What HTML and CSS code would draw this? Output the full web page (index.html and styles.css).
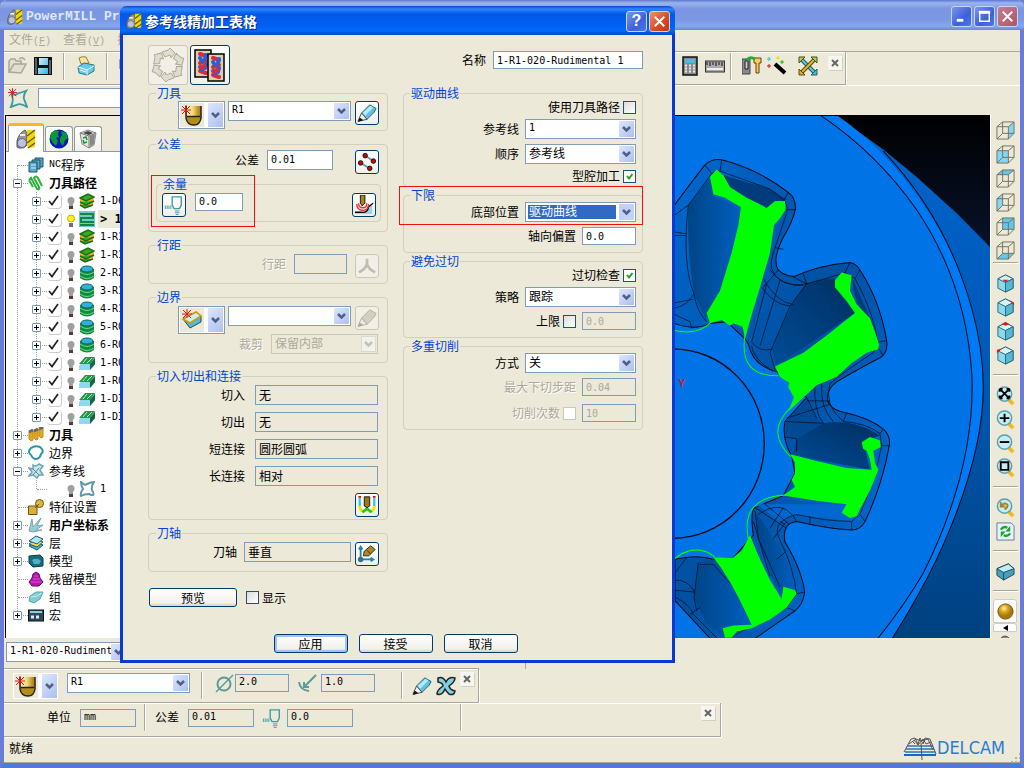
FILE: index.html
```html
<!DOCTYPE html>
<html lang="zh-CN">
<head>
  <meta charset="UTF-8">
  <meta name="viewport" content="width=device-width, initial-scale=1.0">
  <title>PowerMILL Pro</title>
  <link rel="stylesheet" href="styles.css">
</head>
<body>
  <svg class="sprite" width="0" height="0">
    <defs>
      <linearGradient id="gold" x1="0" x2="1"><stop offset="0" stop-color="#fff6c0"/><stop offset=".5" stop-color="#f4d878"/><stop offset="1" stop-color="#b08818"/></linearGradient>
      <linearGradient id="aqua" x1="0" x2="1" y2="1"><stop offset="0" stop-color="#d8f4ff"/><stop offset="1" stop-color="#38b0d8"/></linearGradient>
      <radialGradient id="ball" cx=".4" cy=".3"><stop offset="0" stop-color="#fff0a0"/><stop offset=".5" stop-color="#d8a820"/><stop offset="1" stop-color="#a87808"/></radialGradient>
    </defs>
    <symbol id="i-mill" viewBox="0 0 20 20">
      <path d="M1 18V12Q3 4 9 1L11 4V16Q8 20 3 19Z" fill="#989898" stroke="#555"/>
      <circle cx="6" cy="14" r="4.500" fill="#bcc2e4" stroke="#667"/><path d="M4 6H9" stroke="#eee" stroke-width="2"/>
      <path d="M11 1H19V18L15 19L11 17Z" fill="#f4d800"/><path d="M11 7L19 1M11 14L19 8M12 19L19 14" stroke="#6b5b00" stroke-width="1.500"/>
    </symbol>
    <symbol id="i-globe" viewBox="0 0 20 20">
      <circle cx="10" cy="10" r="9.500" fill="#0818b8"/>
      <path d="M2 4L6 1L10 2L9 5L10 8L7 9L9 12L7 17L4 14L1 9ZM12 2L17 4L19 9L16 11L14 17L11 13L11 9L13 6Z" fill="#089838"/>
    </symbol>
    <symbol id="i-bin" viewBox="0 0 20 20">
      <path d="M2 4L10 1L18 4L16 16L11 19L4 15Z" fill="#e4e4e4" stroke="#888"/><path d="M2 4L11 7L18 4M11 7V19" stroke="#777" fill="none"/><path d="M12 7L17 5L16 15L12 18Z" fill="#888"/><path d="M5 4L10 2L15 4L11 6Z" fill="#444"/>
      <path d="M5 9L8 8L9 11M9 13L6 14L5 11" stroke="#18983c" stroke-width="1.500" fill="none"/>
    </symbol>
    <symbol id="i-open" viewBox="0 0 20 20">
      <path d="M1 16V5L3 3H7L8 5H13V8M1 16L6 8H18L13 17L1 16ZM11 3Q14 0 17 4" fill="#e2dfd0" stroke="#aaa798" stroke-width="1.500"/>
    </symbol>
    <symbol id="i-save" viewBox="0 0 20 20">
      <path d="M1 1H19V19H1Z" fill="#111"/><path d="M6 2H15V9H6ZM5 12H15V18H5Z" fill="url(#aqua)"/><path d="M3 2V18M17 4V18" stroke="#58606a" stroke-width="2"/>
    </symbol>
    <symbol id="i-print" viewBox="0 0 20 20">
      <path d="M5 8L3 2Q6 0 10 1L13 7Z" fill="#ffe4a0" stroke="#9a7a30"/>
      <path d="M2 11L8 7L18 9V15L11 19L3 17Z" fill="#6cc8e4" stroke="#257a9a"/><path d="M2 11L11 14L18 10M11 14V19M4 14L10 16" stroke="#e4faff" fill="none"/>
    </symbol>
    <symbol id="i-newref" viewBox="0 0 22 22">
      <path d="M4 6Q8 9 11 6Q15 5 20 3Q16 9 18 13Q20 18 21 21Q15 17 11 18Q6 20 3 21Q6 15 5 11Z" fill="none" stroke="#3f9aa4" stroke-width="2"/>
      <path d="M5 0V11M0 5H10M1 1L9 9M9 1L1 9" stroke="#d81818"/>
    </symbol>
    <symbol id="i-calc" viewBox="0 0 16 20">
      <rect x="1" y="1" width="14" height="18" fill="#8a8a8a" stroke="#111" stroke-width="1.500"/><rect x="3" y="3" width="10" height="4" fill="#50b8e8"/>
      <path d="M3 9.500H13M3 12.500H13M3 15.500H13" stroke="#e8e8e8" stroke-width="2" stroke-dasharray="2 2"/>
    </symbol>
    <symbol id="i-ruler" viewBox="0 0 20 20">
      <rect x=".5" y="5" width="19" height="11" fill="#aaa" stroke="#333"/><path d="M2 9V6M5 10V6M8 9V6M11 10V6M14 9V6M17 10V6" stroke="#111"/><path d="M2 13H18" stroke="#eee" stroke-width="2"/>
    </symbol>
    <symbol id="i-tools" viewBox="0 0 20 20">
      <path d="M0 3H8V18H0Z" fill="#888" stroke="#444"/><path d="M3 5H6V13H3Z" fill="#ccc" stroke="#222"/>
      <path d="M12 2H19V7H17V17H14V7H12Z" fill="#f8cc60" stroke="#654008"/><path d="M5 4Q8 0 13 3" stroke="#20b030" stroke-width="3" fill="none"/>
    </symbol>
    <symbol id="i-wand" viewBox="0 0 20 20">
      <path d="M8 8L18 17" stroke="#000" stroke-width="4"/><path d="M2 1V5M0 3H4" stroke="#00d0e8"/><path d="M11 0V4M9 2H13" stroke="#f0e000"/><path d="M15 4V8M13 6H17" stroke="#10b810"/><path d="M2 8V12M0 10H4" stroke="#d81010"/>
    </symbol>
    <symbol id="i-arrows" viewBox="0 0 20 20">
      <path d="M4 4L16 16" stroke="#1f5e68" stroke-width="4"/><path d="M4 4L16 16" stroke="#60c8d0" stroke-width="2"/><path d="M16 4L4 16" stroke="#5a4a10" stroke-width="4"/><path d="M16 4L4 16" stroke="#d8b830" stroke-width="2"/>
      <path d="M1 1H7L1 7ZM19 1V7L13 1Z" fill="#b8cc50" stroke="#40501a"/><path d="M1 19V13L7 19Z" fill="#e0b020" stroke="#5a4a10"/><path d="M19 19H13L19 13Z" fill="#48bcd0" stroke="#1f5e68"/>
    </symbol>
    <symbol id="i-newtool" viewBox="0 0 24 24">
      <rect width="24" height="24" fill="#ece9d8"/>
      <path d="M6 3V15Q7 22 14 22Q20 22 21 15V3H18V13H10V3Z" fill="#b48c1c"/><path d="M7 3H19V13H7Z" fill="url(#gold)"/><path d="M6 3V15Q7 22 14 22Q20 22 21 15V3M7 13.500H20" fill="none" stroke="#222" stroke-width="1.500"/>
      <path d="M6 2V12M1 7H11M2 3L10 11M10 3L2 11" stroke="#d81818"/>
    </symbol>
    <symbol id="i-newbound" viewBox="0 0 24 24">
      <rect width="24" height="24" fill="#ece9d8"/>
      <path d="M3 11L10 20L21 14V8L16 4Z" fill="#58b8cc" stroke="#24505a"/><path d="M3 11L16 4L21 8L10 15Z" fill="#c8f0f8" stroke="#d0980c" stroke-width="1.500"/>
      <path d="M7 1V10M2 6H12M3 2L11 10M11 2L3 10" stroke="#d81818"/>
    </symbol>
    <symbol id="i-pencil" viewBox="0 0 22 22">
      <path d="M5 11L14 2L21 6L19 10L11 18Z" fill="#60c0e0" stroke="#285868"/><path d="M6 11L15 3L18 5L9 14Z" fill="#b0ecfc"/><path d="M5 11L1 20L11 18Z" fill="#eee" stroke="#444"/><path d="M3 16L1 21L7 19Z" fill="#111"/>
    </symbol>
    <symbol id="i-pencil-off" viewBox="0 0 22 22">
      <path d="M5 11L14 2L21 6L19 10L11 18Z" fill="#d2cfc0" stroke="#b0ad9e"/><path d="M5 11L1 20L11 18Z" fill="#eceadf" stroke="#b0ad9e"/><path d="M3 16L1 21L7 19Z" fill="#aaa798"/>
    </symbol>
    <symbol id="i-recycle" viewBox="0 0 36 36">
      <g fill="#e0ddce" stroke="#aeab9c">
        <path id="seg" d="M12 5L18 3L20 1L25 6L21 11L20 8L15 10Z"/>
        <use href="#seg" transform="rotate(60 18 18)"/><use href="#seg" transform="rotate(120 18 18)"/><use href="#seg" transform="rotate(180 18 18)"/><use href="#seg" transform="rotate(240 18 18)"/><use href="#seg" transform="rotate(300 18 18)"/>
      </g>
    </symbol>
    <symbol id="i-copy" viewBox="0 0 36 36">
      <g id="sheet">
        <rect x="3" y="3" width="16" height="27" fill="#d8d0b0" stroke="#000" stroke-width="1.500"/>
        <g stroke-width="4" stroke-linecap="round"><path d="M8 7L14 9M8 16L14 14M8 24L14 26" stroke="#e02838"/><path d="M14 8L13 12M8 11L10 14M14 17L13 21M8 20L10 23" stroke="#2860d8"/><path d="M12 19L9 21" stroke="#e02838"/></g>
      </g>
      <use href="#sheet" x="13" y="4"/>
    </symbol>
    <symbol id="i-points" viewBox="0 0 22 22">
      <path d="M9 4L18 10M4 12L14 18" stroke="#58a8b8" stroke-width="2"/>
      <g fill="#b81010" stroke="#300"><circle cx="9" cy="4" r="2.500"/><circle cx="18" cy="10" r="2.500"/><circle cx="4" cy="12" r="2.500"/><circle cx="14" cy="18" r="2.500"/></g>
    </symbol>
    <symbol id="i-thick" viewBox="0 0 22 22">
      <path d="M9 2H19V11L17 15H11L9 11Z" fill="none" stroke="#3f9aa4" stroke-width="1.500"/><path d="M1 13.500H9" stroke="#3f9aa4" stroke-width="4" stroke-dasharray="1 1"/><path d="M12 17.500H17M12 19.500H17M13 21.500H16" stroke="#3f9aa4"/>
    </symbol>
    <symbol id="i-compthick" viewBox="0 0 22 22">
      <path d="M1 19H8Q15 20 16 13L20 9V21H1Z" fill="#90d8f0"/><path d="M1 19H8Q15 20 16 13L21 9" fill="none" stroke="#000" stroke-width="1.500"/>
      <path d="M3 10Q3 17 10 17Q16 17 16 10M5 9Q5 14 10 14Q14 14 14 9" fill="none" stroke="#f03040" stroke-width="1.500"/><path d="M7 0H12V9L9 12L7 9Z" fill="#a88420" stroke="#111"/>
    </symbol>
    <symbol id="i-step-off" viewBox="0 0 22 22"><path d="M11 3V9Q9 15 2 18M11 9Q13 15 20 18" fill="none" stroke="#c0bdae" stroke-width="3"/></symbol>
    <symbol id="i-leads" viewBox="0 0 22 22">
      <path d="M3 3V13M19 3V13" stroke="#28c8e8" stroke-width="2.500"/><path d="M3 1V3M19 1V3" stroke="#e01010" stroke-width="3"/><path d="M3 12Q3 18 8 18M19 12Q19 18 14 18" stroke="#f0e400" stroke-width="3" fill="none"/><path d="M6 19L11 15L16 19" stroke="#20c820" stroke-width="3" fill="none"/>
      <path d="M8 2H14V12L11 14L8 12Z" fill="#a07810" stroke="#111"/>
    </symbol>
    <symbol id="i-axis" viewBox="0 0 22 22">
      <path d="M4 17V4M4 17H17M2 6L4 3L6 6M15 15L18 17L15 19" fill="none" stroke="#1c88a0" stroke-width="2"/><circle cx="4" cy="17" r="3" fill="#387080"/><path d="M7 13L8 8L15 2L20 6L13 13Z" fill="#b08820" stroke="#222"/><path d="M11 7L15 11" stroke="#332808"/>
    </symbol>
    <symbol id="i-dia" viewBox="0 0 20 20"><circle cx="9" cy="11" r="6.500" fill="none" stroke="#5a9a9a" stroke-width="2"/><path d="M1 19L18 2" stroke="#5a9a9a" stroke-width="1.500"/></symbol>
    <symbol id="i-rad" viewBox="0 0 20 20"><path d="M1 9Q2 17 11 18M18 2L6 14M6 9V14H11" fill="none" stroke="#5a9a9a" stroke-width="2"/></symbol>
    <symbol id="i-cross" viewBox="0 0 20 20">
      <path d="M2 2Q7 0 10 6Q13 0 19 2Q19 6 13 10Q14 14 19 15Q18 20 13 18Q10 15 9 13Q6 20 1 18Q1 14 7 10Q7 7 2 6Z" fill="#80d0e4" stroke="#222" stroke-width="1.500"/>
    </symbol>
    <!-- explorer -->
    <symbol id="i-nc" viewBox="0 0 16 16"><g fill="#58a8c4" stroke="#1f5266"><path d="M7 1H15V10H7Z"/><path d="M4 3H12V12H4Z"/><path d="M1 5H9V15H1Z"/></g><path d="M3 8H8M3 11H8" stroke="#c8f0ff"/></symbol>
    <symbol id="i-path" viewBox="0 0 16 16"><path d="M1 5L3 3L9 14Q12 15 11 12L6 3Q8 0 10 3L14 11M1 5L5 12" fill="none" stroke="#30b038" stroke-width="2"/></symbol>
    <symbol id="i-layers" viewBox="0 0 16 16"><path d="M1 6L10 1L15 4L14 12L5 15L1 12Z" fill="#e8b020"/><path d="M1 5L9 1L15 4L7 8ZM1 9L7 12L15 8M1 12L6 15L14 12" fill="#38a828" stroke="#177018" stroke-width="1.500"/></symbol>
    <symbol id="i-raster" viewBox="0 0 16 16"><rect width="16" height="16" fill="#70c8d0"/><path d="M1 3H14V7H2V11H15M1 14H15" fill="none" stroke="#108838" stroke-width="2"/></symbol>
    <symbol id="i-coil" viewBox="0 0 16 16"><path d="M1 4V13Q8 18 15 13V4Z" fill="#108848"/><path d="M1 7Q8 12 15 7M1 11Q8 16 15 11" stroke="#70e070" fill="none"/><ellipse cx="8" cy="4" rx="6" ry="3" fill="#30b0e0" stroke="#0b6850"/></symbol>
    <symbol id="i-slope" viewBox="0 0 16 16"><path d="M0 11L6 3H16V10L11 15H0Z" fill="#90d8f0"/><path d="M0 9L6 2H16L11 9Z" fill="#20984c"/><path d="M4 8L8 3M8 8L13 3" stroke="#b0f0c0"/><path d="M11 9L16 3V9L11 15Z" fill="#146840"/></symbol>
    <symbol id="i-cutters" viewBox="0 0 16 16"><path d="M1 5L5 3V13L3 14L1 12ZM6 4L10 2V12L8 13L6 11ZM11 2L15 0V10L13 11L11 9Z" fill="#e0a820" stroke="#c08c18"/><path d="M1 5L5 3M6 4L10 2M11 2L15 0" stroke="#666" stroke-width="3"/></symbol>
    <symbol id="i-bound" viewBox="0 0 16 16"><path d="M3 3Q7 0 12 2Q17 6 13 9Q12 14 7 14Q4 13 3 10Q-1 7 3 3Z" fill="none" stroke="#2898a8" stroke-width="2"/></symbol>
    <symbol id="i-refs" viewBox="0 0 16 16"><path d="M5 2Q8 4 11 1L15 3L12 7L15 12L11 12L9 15L5 12L1 13L4 9L1 5L5 6Z" fill="#c8e4e8" stroke="#6ca4b0" stroke-width="1.500"/><path d="M5 6L11 12M11 5L5 12" stroke="#4c8c9c"/></symbol>
    <symbol id="i-ref" viewBox="0 0 16 16"><path d="M2 1Q6 5 8 3Q12 1 15 1Q11 7 14 11Q16 16 10 13Q5 13 2 15Q1 12 4 8Q2 5 2 1Z" fill="none" stroke="#5c9caa" stroke-width="2"/></symbol>
    <symbol id="i-feat" viewBox="0 0 16 16"><circle cx="11.500" cy="4.500" r="4" fill="#e0b838" stroke="#705410"/><path d="M0.500 7H9V15.500H0.500Z" fill="#d8b040" stroke="#705410"/><path d="M7 9L11 5" stroke="#705410"/></symbol>
    <symbol id="i-wp" viewBox="0 0 16 16"><path d="M1 14L4 2L5 10L13 1L9 9L15 8L8 13L14 13L5 15Z" fill="#98ccd4" stroke="#78a8b0"/></symbol>
    <symbol id="i-level" viewBox="0 0 16 16"><path d="M1 11L8 7L15 10L9 15Z" fill="#48b0d0" stroke="#205868"/><path d="M1 9L8 4L15 7L9 12Z" fill="#f8e048" stroke="#205868"/><path d="M1 6L8 1L15 4L9 9Z" fill="#a8e8f8" stroke="#205868"/></symbol>
    <symbol id="i-model" viewBox="0 0 16 16"><path d="M1 3L12 2L15 5V13L5 14L1 10Z" fill="#186c80" stroke="#0c3c48"/><path d="M4 7Q9 4 13 8L11 11H6Z" fill="#50b0c0"/></symbol>
    <symbol id="i-stock" viewBox="0 0 16 16"><path d="M8 1L11 3L12 7L15 11L11 15H4L1 11L4 7L5 3Z" fill="#b818b0" stroke="#600860"/><path d="M6 5H10M5 8H12M3 11H14" stroke="#d850d0"/></symbol>
    <symbol id="i-group" viewBox="0 0 16 16"><path d="M2 7L8 3H15L12 10L6 14L1 12Z" fill="#80ccd0" stroke="#5ca4a8"/><path d="M3 8L9 7L14 4" stroke="#c8f0f0" fill="none"/></symbol>
    <symbol id="i-macro" viewBox="0 0 16 16"><rect x=".5" y="3" width="15" height="11" fill="#304858" stroke="#111"/><path d="M2 5H14" stroke="#88d0e0" stroke-width="2"/><path d="M3 10H13" stroke="#d8f0f8" stroke-width="3" stroke-dasharray="3 2"/></symbol>
    <symbol id="i-bulb" viewBox="0 0 10 14"><circle cx="5" cy="4.500" r="3.500" fill="#a0a0a0"/><path d="M3 7H7V10H3Z" fill="#a0a0a0"/><path d="M3 10H7V13H3Z" fill="#5a3c30"/></symbol>
    <symbol id="i-bulb-on" viewBox="0 0 10 14"><circle cx="5" cy="4.500" r="3.500" fill="#fff020" stroke="#c8b000"/><path d="M3 9H7V13H3Z" fill="#707070"/></symbol>
    <!-- view cubes -->
    <symbol id="i-wire" viewBox="0 0 20 20"><path d="M1 6H13V19H1ZM7 1H19V13H7ZM1 6L7 1M13 6L19 1M13 19L19 13M1 19L7 13" fill="none" stroke="#77705c"/></symbol>
    <symbol id="i-cube" viewBox="0 0 20 20"><path d="M2 5L10 1L18 5V15L10 19L2 15Z" fill="#8cd8ec" stroke="#2c6878"/><path d="M2 5L10 9L18 5L10 1Z" fill="#d4f4fc" stroke="#2c6878"/><path d="M10 9L18 5V15L10 19Z" fill="#58b8d4" stroke="#2c6878"/></symbol>
    <symbol id="i-lens" viewBox="0 0 20 20"><path d="M13 14L18 19" stroke="#f0b828" stroke-width="4"/><circle cx="9" cy="8.500" r="7.500" fill="#c8ecf4" stroke="#58a0b0" stroke-width="1.500"/></symbol>
  </svg>

  <div class="app">
    <header class="titlebar">
      <svg class="i16"><use href="#i-mill"/></svg>
      <h1>PowerMILL Pro</h1>
      <div class="win-buttons">
        <button class="win-btn" aria-label="最小化"><svg viewBox="0 0 20 20"><path d="M5 14H12" stroke="#fff" stroke-width="3"/></svg></button>
        <button class="win-btn" aria-label="最大化"><svg viewBox="0 0 20 20"><path d="M5 6H15V15H5Z" fill="none" stroke="#fff" stroke-width="1.500"/><path d="M4 5.500H16" stroke="#fff" stroke-width="3"/></svg></button>
        <button class="win-btn close-dim" aria-label="关闭"><svg viewBox="0 0 20 20"><path d="M5 5L15 15M15 5L5 15" stroke="#fff" stroke-width="2"/></svg></button>
      </div>
    </header>

    <nav class="menubar">
      <button>文件<span>(<u>F</u>)</span></button>
      <button>查看<span>(<u>V</u>)</span></button>
      <button>插入<span>(<u>I</u>)</span></button>
    </nav>

    <div class="toolbar main-tools">
      <button class="tool"><svg class="i20"><use href="#i-open"/></svg></button>
      <button class="tool"><svg class="i20"><use href="#i-save"/></svg></button>
      <span class="sep"></span>
      <button class="tool print"><svg class="i20"><use href="#i-print"/></svg></button>
      <span class="sep"></span>
      <button class="tool"><svg class="i20"><use href="#i-model"/></svg></button>
      <div class="tools-end">
        <button class="tool"><svg class="i20"><use href="#i-calc"/></svg></button>
        <button class="tool"><svg class="i20"><use href="#i-ruler"/></svg></button>
        <span class="sep"></span>
        <button class="tool"><svg class="i20"><use href="#i-tools"/></svg></button>
        <button class="tool"><svg class="i20"><use href="#i-wand"/></svg></button>
        <button class="tool arrows"><svg class="i20"><use href="#i-arrows"/></svg></button>
        <button class="bar-close" aria-label="关闭"><svg viewBox="0 0 14 14"><path d="M4 4L10 10M10 4L4 10" stroke="#666" stroke-width="2"/></svg></button>
      </div>
    </div>

    <div class="refbar">
      <button class="tool"><svg class="i20"><use href="#i-newref"/></svg></button>
      <input class="field" type="text" aria-label="参考线名称">
    </div>

    <main class="workspace">
      <aside class="explorer">
        <div class="tabs">
          <button class="tab active"><svg class="i20"><use href="#i-mill"/></svg></button>
          <button class="tab"><svg class="i20"><use href="#i-globe"/></svg></button>
          <button class="tab"><svg class="i20"><use href="#i-bin"/></svg></button>
        </div>
        <ul class="tree">
          <li><div class="node"><i class="dots"></i><svg class="i16"><use href="#i-nc"/></svg><span class="latin">NC</span>程序</div></li>
          <li><div class="node"><i class="exp minus"></i><svg class="i16"><use href="#i-path"/></svg><b>刀具路径</b></div>
            <ul>
              <li class="leaf"><i class="exp"></i><i class="tick"></i><svg class="bulb"><use href="#i-bulb"/></svg><svg class="i16"><use href="#i-layers"/></svg><span>1-D6</span></li>
              <li class="leaf"><i class="exp"></i><i class="tick"></i><svg class="bulb"><use href="#i-bulb-on"/></svg><svg class="i16"><use href="#i-raster"/></svg><span class="current">&gt; 1-R1</span></li>
              <li class="leaf"><i class="exp"></i><i class="tick"></i><svg class="bulb"><use href="#i-bulb"/></svg><svg class="i16"><use href="#i-layers"/></svg><span>1-R1</span></li>
              <li class="leaf"><i class="exp"></i><i class="tick"></i><svg class="bulb"><use href="#i-bulb"/></svg><svg class="i16"><use href="#i-layers"/></svg><span>1-R1</span></li>
              <li class="leaf"><i class="exp"></i><i class="tick"></i><svg class="bulb"><use href="#i-bulb"/></svg><svg class="i16"><use href="#i-coil"/></svg><span>2-R2</span></li>
              <li class="leaf"><i class="exp"></i><i class="tick"></i><svg class="bulb"><use href="#i-bulb"/></svg><svg class="i16"><use href="#i-coil"/></svg><span>3-R1</span></li>
              <li class="leaf"><i class="exp"></i><i class="tick"></i><svg class="bulb"><use href="#i-bulb"/></svg><svg class="i16"><use href="#i-coil"/></svg><span>4-R1</span></li>
              <li class="leaf"><i class="exp"></i><i class="tick"></i><svg class="bulb"><use href="#i-bulb"/></svg><svg class="i16"><use href="#i-coil"/></svg><span>5-R0</span></li>
              <li class="leaf"><i class="exp"></i><i class="tick"></i><svg class="bulb"><use href="#i-bulb"/></svg><svg class="i16"><use href="#i-coil"/></svg><span>6-R0</span></li>
              <li class="leaf"><i class="exp"></i><i class="tick"></i><svg class="bulb"><use href="#i-bulb"/></svg><svg class="i16"><use href="#i-slope"/></svg><span>1-R0</span></li>
              <li class="leaf"><i class="exp"></i><i class="tick"></i><svg class="bulb"><use href="#i-bulb"/></svg><svg class="i16"><use href="#i-slope"/></svg><span>1-R0</span></li>
              <li class="leaf"><i class="exp"></i><i class="tick"></i><svg class="bulb"><use href="#i-bulb"/></svg><svg class="i16"><use href="#i-slope"/></svg><span>1-D3</span></li>
              <li class="leaf"><i class="exp"></i><i class="tick"></i><svg class="bulb"><use href="#i-bulb"/></svg><svg class="i16"><use href="#i-slope"/></svg><span>1-D3</span></li>
            </ul>
          </li>
          <li><div class="node"><i class="exp"></i><svg class="i16"><use href="#i-cutters"/></svg><b>刀具</b></div></li>
          <li><div class="node"><i class="exp"></i><svg class="i16"><use href="#i-bound"/></svg>边界</div></li>
          <li><div class="node"><i class="exp minus"></i><svg class="i16"><use href="#i-refs"/></svg>参考线</div>
            <ul>
              <li class="leaf"><i class="dots"></i><i class="tick none"></i><svg class="bulb"><use href="#i-bulb"/></svg><svg class="i16"><use href="#i-ref"/></svg><span>1</span></li>
            </ul>
          </li>
          <li><div class="node"><i class="dots"></i><svg class="i16"><use href="#i-feat"/></svg>特征设置</div></li>
          <li><div class="node"><i class="exp"></i><svg class="i16"><use href="#i-wp"/></svg><b>用户坐标系</b></div></li>
          <li><div class="node"><i class="exp"></i><svg class="i16"><use href="#i-level"/></svg>层</div></li>
          <li><div class="node"><i class="exp"></i><svg class="i16"><use href="#i-model"/></svg>模型</div></li>
          <li><div class="node"><i class="dots"></i><svg class="i16"><use href="#i-stock"/></svg>残留模型</div></li>
          <li><div class="node"><i class="dots"></i><svg class="i16"><use href="#i-group"/></svg>组</div></li>
          <li><div class="node"><i class="exp"></i><svg class="i16"><use href="#i-macro"/></svg>宏</div></li>
        </ul>
      </aside>

      <div class="viewport">
        <svg viewBox="175 115 815 522" preserveAspectRatio="xMaxYMin slice">
          <defs>
            <linearGradient id="sky" x1="0" x2="0" y1="0" y2="1"><stop offset="0" stop-color="#000"/><stop offset=".25" stop-color="#08122a"/></linearGradient>
            <linearGradient id="plate" x1="0" x2="0" y1="0" y2="1"><stop offset="0" stop-color="#0064cc"/><stop offset=".5" stop-color="#0058b4"/><stop offset="1" stop-color="#00407e"/></linearGradient>
            <linearGradient id="wall" x1="0" x2="1" y1="0" y2="1"><stop offset="0" stop-color="#0068d0"/><stop offset=".5" stop-color="#0050a0"/><stop offset="1" stop-color="#0070e0"/></linearGradient>
            <linearGradient id="floor" x1="0" x2="1" y1="0" y2="0"><stop offset="0" stop-color="#004486"/><stop offset="1" stop-color="#0060c0"/></linearGradient>
            <linearGradient id="deep" x1="1" x2="0" y1="0" y2="1"><stop offset="0" stop-color="#002f60"/><stop offset="1" stop-color="#004c98"/></linearGradient>
          </defs>
          <g transform="translate(670 114) scale(.3333 .3444)" stroke-linejoin="round">
            <rect x="-1500" y="0" width="2500" height="1530" fill="url(#sky)"/>
            <path d="M-1500 0H495L640 100L740 180L860 285L962 385V1530H-1500Z" fill="url(#plate)"/>
            <!-- rim and face -->
            <path d="M-1500 0H500Q650 100 760 260Q930 500 940 770Q940 1000 800 1290Q740 1410 660 1530H-1500Z" fill="#007af4"/>
            <path d="M-1500 0H450Q620 110 740 275Q890 490 906 760Q915 1030 760 1330Q700 1430 615 1530H-1500Z" fill="#0073e6"/>
            <path d="M450 0Q620 110 740 275Q890 490 906 760Q915 1030 760 1330Q700 1430 615 1530M640 105Q830 300 905 560Q940 680 940 790Q940 1000 800 1290Q740 1410 660 1530" fill="none" stroke="#000814" stroke-width="3"/>
            <!-- pocket ring -->
            <path d="M0 280Q60 200 105 145Q125 125 155 130Q260 155 355 225Q378 240 376 275Q368 310 340 355Q305 420 325 450Q345 470 375 468Q450 435 540 428Q560 432 570 450Q630 540 650 655Q655 690 630 705Q570 735 500 775Q465 800 475 835Q490 860 530 865Q600 880 640 912Q662 930 658 960Q635 1080 585 1180Q570 1205 545 1205Q470 1200 380 1180Q335 1185 345 1240Q395 1320 404 1385Q400 1420 375 1440Q300 1490 240 1530H130L15 1410V1290Q80 1275 130 1290L190 1285L250 1220Q240 1150 255 1140L340 1105L375 1040L365 990Q335 940 345 890L410 820L320 745Q250 730 235 665L225 650L170 600L120 605Q70 630 0 600Z" fill="url(#wall)" stroke="#000814" stroke-width="3"/>
            <path d="M55 262L125 175L130 235L215 270L185 400L150 520L105 590L72 520Q50 390 55 262Z" fill="url(#floor)"/>
            <path d="M160 175L300 215L350 245L290 270L230 240L180 210Z" fill="#003c7c"/>
            <path d="M410 490Q450 475 495 475L495 500L555 575L440 650L320 725L305 680L370 540Z" fill="url(#deep)"/>
            <path d="M545 470L615 620L560 545Z" fill="#003c7c"/>
            <path d="M460 895Q550 880 630 930L580 950L600 1030L440 1000L370 985L380 940Z" fill="url(#deep)"/>
            <path d="M345 890L410 830L440 880L460 895L380 940L345 935Z" fill="#004a94"/>
            <path d="M255 1150L340 1270L385 1375L340 1370L335 1400L300 1330L265 1230Z" fill="url(#floor)"/>
            <path d="M85 1300L130 1290L180 1360L245 1480L160 1485L170 1518L110 1480L72 1400Z" fill="url(#floor)"/>
            <path d="M260 1130L520 1130L560 1165L545 1180L380 1160L330 1180Z" fill="#0068d0"/>
            <!-- isolines -->
            <g fill="none" stroke="#000814" stroke-width="2">
              <path d="M15 290L55 262L125 170Q145 155 170 170L300 215L345 250Q358 270 345 300L310 400Q290 450 330 480Q370 500 410 490Q470 475 525 458L555 475Q610 570 625 665L610 690Q530 740 480 780"/>
              <path d="M105 145L125 170M155 130L150 165M355 225L340 250M376 275L345 275M340 390L315 385M325 450L280 500M365 468L410 490M400 462L410 490M540 428L525 458M570 450L555 475M650 655L622 660M640 700L625 675"/>
              <path d="M280 475Q320 545 370 550M275 500Q310 550 360 555M300 450Q340 500 400 495M290 490L245 660Q270 690 305 680M330 480L270 670M410 490L360 555L300 690L315 740M245 670Q250 710 310 745"/>
              <path d="M55 262Q35 430 72 520Q80 570 110 600M15 350H48M15 340L50 345M15 560Q50 555 72 520M15 545L70 535M15 580L60 600L65 620"/>
              <path d="M435 780Q430 860 460 895M455 780Q450 850 490 890M410 820L440 880M480 780Q460 840 520 890Q590 895 630 925L635 960Q615 1060 570 1160L545 1180Q470 1180 380 1160Q300 1180 330 1235Q370 1310 380 1390L350 1430L180 1518"/>
              <path d="M345 890L460 895M345 935L380 940L380 975M350 880L480 840M410 830L480 830M530 865L520 890M640 912L630 925M658 960H635M585 1180L570 1160M545 1205V1180M420 1185V1165M345 1190L330 1180"/>
              <path d="M255 1140L350 1200M285 1130L360 1190M265 1160Q340 1110 380 1180M300 1200L340 1140M310 1230L350 1180M255 1150L265 1230L330 1370M250 1180L300 1340M345 1270L320 1290M404 1385L380 1390M375 1440L350 1430"/>
              <path d="M15 1350Q60 1350 75 1390M15 1380L72 1385M15 1400Q60 1420 70 1450L140 1518M85 1300L72 1400L80 1440M15 1330L50 1285M90 1305H130L180 1360M60 1450L90 1430"/>
            </g>
            <circle cx="8" cy="954" r="275" fill="none" stroke="#000814" stroke-width="4"/>
            <!-- toolpath -->
            <g fill="#0f0">
              <path d="M120 180L140 158L160 175L180 210L230 240L290 270L315 250L345 250L347 275L330 300L312 320L300 400L270 500L245 580L225 650L218 615L190 605L180 612L155 595L120 605L110 575L150 510L185 400L205 320L213 268L165 240L130 230Z"/>
              <path d="M495 480L515 457L545 465L540 510L560 550L600 590L615 630L627 665L625 680L590 690L545 720L500 760L440 785L400 820L355 860L372 820L355 790L358 778L330 760L315 730L400 690L470 640L555 575L530 540L495 500Z"/>
              <path d="M575 950L600 935L630 945L632 965L610 975L615 1010L625 1030L600 1090L570 1145L560 1165L540 1170L515 1155L530 1130L440 1120L340 1105L375 1080L365 1060L375 1040L375 1010L360 985L440 1005L530 1025L605 1030L600 1000L590 975L580 970Z"/>
              <path d="M130 1285L190 1285L215 1265L240 1220L265 1280L300 1350L335 1405L340 1370L375 1380L380 1390L350 1430L300 1465L245 1490L200 1500L185 1518H165L158 1490L190 1482L245 1480L210 1410L180 1355L150 1310Z"/>
            </g>
            <path d="M0 622Q80 645 125 600M225 640Q205 760 325 757M362 850Q285 920 362 992M350 1103Q210 1110 235 1230M0 1300Q70 1235 135 1283" fill="none" stroke="#0f0" stroke-width="3"/>
          </g>
          <text x="678" y="386" class="axis-name">Y</text>
        </svg>
      </div>

      <div class="viewbar">
        <div class="tool-group">
          <button class="vtool"><svg viewBox="0 0 20 20"><path d="M13 6L19 1V13L13 19Z" fill="#80d8f4"/><use href="#i-wire"/></svg></button>
          <button class="vtool"><svg viewBox="0 0 20 20"><path d="M1 6H13V19H1Z" fill="#80d8f4"/><use href="#i-wire"/></svg></button>
          <button class="vtool"><svg viewBox="0 0 20 20"><path d="M1 6L7 1H19L13 6Z" fill="#60c8ec"/><use href="#i-wire"/></svg></button>
          <button class="vtool"><svg viewBox="0 0 20 20"><path d="M1 6L7 1V13L1 19Z" fill="#80d8f4"/><use href="#i-wire"/></svg></button>
          <button class="vtool"><svg viewBox="0 0 20 20"><path d="M7 1H19V13H7Z" fill="#60c8ec"/><use href="#i-wire"/></svg></button>
          <button class="vtool"><svg viewBox="0 0 20 20"><path d="M1 19L7 13H19L13 19Z" fill="#60c8ec"/><use href="#i-wire"/></svg></button>
        </div>
        <div class="tool-group">
          <button class="vtool"><svg viewBox="0 0 20 20"><use href="#i-cube"/><path d="M7 6H13L10 9Z" fill="#e01818"/></svg></button>
          <button class="vtool"><svg viewBox="0 0 20 20"><use href="#i-cube"/><path d="M14 2L19 5V8Z" fill="#e01818"/></svg></button>
          <button class="vtool"><svg viewBox="0 0 20 20"><use href="#i-cube"/><path d="M6 2L10 0L14 2L10 4Z" fill="#e01818"/></svg></button>
          <button class="vtool"><svg viewBox="0 0 20 20"><use href="#i-cube"/><path d="M1 8V4L6 3Z" fill="#e01818"/></svg></button>
        </div>
        <div class="tool-group">
          <button class="vtool"><svg viewBox="0 0 20 20"><use href="#i-lens"/><path d="M5 4L13 12M13 4L5 12M4 3H7M4 3V6M14 3H11M14 3V6M4 13H7M4 13V10M14 13H11M14 13V10" stroke="#000" stroke-width="2"/></svg></button>
          <button class="vtool"><svg viewBox="0 0 20 20"><use href="#i-lens"/><path d="M9 4V13M4 8.500H14" stroke="#000" stroke-width="2"/></svg></button>
          <button class="vtool"><svg viewBox="0 0 20 20"><use href="#i-lens"/><path d="M4 8.500H14" stroke="#000" stroke-width="2"/></svg></button>
          <button class="vtool"><svg viewBox="0 0 20 20"><use href="#i-lens"/><path d="M5 4.500H13V12.500H5Z" fill="none" stroke="#000" stroke-width="2"/></svg></button>
        </div>
        <div class="tool-group">
          <button class="vtool"><svg viewBox="0 0 20 20"><use href="#i-lens"/><path d="M5 4V9H10M6 8Q9 4 12 7Q13 10 9 12" fill="none" stroke="#a88420" stroke-width="2"/></svg></button>
          <button class="vtool"><svg viewBox="0 0 20 20"><path d="M1 1H16L19 4V19H1Z" fill="#e8f0fc" stroke="#6878a8"/><path d="M5 8Q8 4 12 6M15 12Q12 16 8 14" fill="none" stroke="#18a828" stroke-width="2.500"/><path d="M15 4V10H10ZM5 16V10H10Z" fill="#18a828"/></svg></button>
        </div>
        <div class="tool-group">
          <button class="vtool"><svg viewBox="0 0 20 20"><path d="M1 7L13 2L19 7V13L8 19L1 14Z" fill="#48a0b8" stroke="#184858"/><path d="M1 7L13 2L19 7L8 11Z" fill="#c0ecf8" stroke="#184858"/><path d="M8 11V19" stroke="#184858"/></svg></button>
        </div>
        <div class="shade">
          <button class="shade-btn"><svg viewBox="0 0 20 20"><circle cx="10" cy="10" r="8" fill="url(#ball)" stroke="#705008"/></svg></button>
          <button class="shade-more" aria-label="更多"></button>
          <svg class="peek" viewBox="0 0 12 4"><path d="M1 4Q6 -2 11 4" fill="#888" stroke="#555"/></svg>
        </div>
      </div>
    </main>

    <div class="pathbar">
      <select class="field" aria-label="激活刀具路径"><option>1-R1-020-Rudimental_1</option></select>
    </div>

    <div class="toolbar cutter-bar">
      <button class="split flat"><svg class="i24"><use href="#i-newtool"/></svg><i class="drop"></i></button>
      <select class="field cutter" aria-label="刀具"><option>R1</option></select>
      <span class="sep"></span>
      <label class="icon-field"><svg class="i20"><use href="#i-dia"/></svg><input class="field ro" type="text" value="2.0" aria-label="直径"></label>
      <label class="icon-field"><svg class="i20"><use href="#i-rad"/></svg><input class="field ro" type="text" value="1.0" aria-label="刀尖半径"></label>
      <span class="sep"></span>
      <button class="tool"><svg class="i20"><use href="#i-pencil"/></svg></button>
      <button class="tool"><svg class="i20"><use href="#i-cross"/></svg></button>
      <button class="bar-close" aria-label="关闭"><svg viewBox="0 0 14 14"><path d="M4 4L10 10M10 4L4 10" stroke="#666" stroke-width="2"/></svg></button>
    </div>

    <div class="toolbar info-bar">
      <label for="unit">单位</label><input id="unit" class="field ro unit" type="text" value="mm">
      <span class="sep"></span>
      <label for="tol2">公差</label><input id="tol2" class="field ro" type="text" value="0.01">
      <label class="icon-field"><svg class="i20"><use href="#i-thick"/></svg><input class="field ro" type="text" value="0.0" aria-label="余量"></label>
      <span class="sep last"></span>
      <button class="bar-close" aria-label="关闭"><svg viewBox="0 0 14 14"><path d="M4 4L10 10M10 4L4 10" stroke="#666" stroke-width="2"/></svg></button>
    </div>

    <footer class="statusbar">
      <span>就绪</span>
      <div class="brand">
        <svg viewBox="0 0 34 24"><path d="M4 10H30M3 13H31M2 16H32" stroke="#2474c8" stroke-width="1.500"/><path d="M1 19H33" stroke="#1468c8" stroke-width="2"/><path d="M1 16L8 3L12 2L15 8L17 2L20 8L22 2L27 3L33 18M6 8L13 3L18 5L25 3L30 14M11 4L15 9L20 3L23 8L28 6M9 5L12 8M18 7L19 24" fill="none" stroke="#555"/></svg>
        <span>DELCAM</span>
      </div>
      <i class="grip"></i>
    </footer>
  </div>

  <section class="dialog" role="dialog" aria-labelledby="dlg-title">
    <div class="dlg-title">
      <svg class="i16"><use href="#i-mill"/></svg>
      <h2 id="dlg-title">参考线精加工表格</h2>
      <button class="win-btn help">?</button>
      <button class="win-btn close" aria-label="关闭"><svg viewBox="0 0 20 20"><path d="M5 5L15 15M15 5L5 15" stroke="#fff" stroke-width="2"/></svg></button>
    </div>

    <form class="dlg-body">
      <div class="cols">
        <div class="col">
          <div class="big-icons">
            <button type="button" class="icon-btn big" disabled><svg><use href="#i-recycle"/></svg></button>
            <button type="button" class="icon-btn big"><svg><use href="#i-copy"/></svg></button>
          </div>

          <fieldset class="g-tool">
            <legend>刀具</legend>
            <div class="row top">
              <button type="button" class="split"><svg class="i24"><use href="#i-newtool"/></svg><i class="drop"></i></button>
              <select class="field cutter" aria-label="刀具"><option>R1</option></select>
              <button type="button" class="icon-btn"><svg><use href="#i-pencil"/></svg></button>
            </div>
          </fieldset>

          <fieldset class="g-tol">
            <legend>公差</legend>
            <div class="row top tol-row">
              <label for="tol">公差</label>
              <input id="tol" class="field" type="text" value="0.01">
              <button type="button" class="icon-btn"><svg><use href="#i-points"/></svg></button>
            </div>
            <fieldset class="g-thick">
              <legend>余量</legend>
              <div class="row top">
                <button type="button" class="icon-btn"><svg><use href="#i-thick"/></svg></button>
                <input class="field" type="text" value="0.0" aria-label="余量">
                <button type="button" class="icon-btn push"><svg><use href="#i-compthick"/></svg></button>
              </div>
            </fieldset>
          </fieldset>

          <fieldset class="g-step">
            <legend>行距</legend>
            <div class="row top">
              <label for="step" class="off">行距</label>
              <input id="step" class="field ro" type="text" disabled>
              <button type="button" class="icon-btn" disabled><svg><use href="#i-step-off"/></svg></button>
            </div>
          </fieldset>

          <fieldset class="g-bound">
            <legend>边界</legend>
            <div class="row top">
              <button type="button" class="split"><svg class="i24"><use href="#i-newbound"/></svg><i class="drop"></i></button>
              <select class="field cutter" aria-label="边界"><option></option></select>
              <button type="button" class="icon-btn" disabled><svg><use href="#i-pencil-off"/></svg></button>
            </div>
            <div class="row">
              <label for="trim" class="off">裁剪</label>
              <select id="trim" class="field cn trim" disabled><option>保留内部</option></select>
            </div>
          </fieldset>

          <fieldset class="g-leads">
            <legend>切入切出和连接</legend>
            <div class="row"><label for="lead-in">切入</label><input id="lead-in" class="field ro cn" type="text" value="无" readonly></div>
            <div class="row"><label for="lead-out">切出</label><input id="lead-out" class="field ro cn" type="text" value="无" readonly></div>
            <div class="row"><label for="link-s">短连接</label><input id="link-s" class="field ro cn" type="text" value="圆形圆弧" readonly></div>
            <div class="row"><label for="link-l">长连接</label><input id="link-l" class="field ro cn" type="text" value="相对" readonly></div>
            <div class="row"><button type="button" class="icon-btn"><svg><use href="#i-leads"/></svg></button></div>
          </fieldset>

          <fieldset class="g-axis">
            <legend>刀轴</legend>
            <div class="row top">
              <label for="axis">刀轴</label>
              <input id="axis" class="field ro cn" type="text" value="垂直" readonly>
              <button type="button" class="icon-btn"><svg><use href="#i-axis"/></svg></button>
            </div>
          </fieldset>
        </div>

        <div class="col right">
          <div class="row name-row">
            <label for="name">名称</label>
            <input id="name" class="field short" type="text" value="1-R1-020-Rudimental_1">
          </div>

          <fieldset class="g-drive">
            <legend>驱动曲线</legend>
            <div class="row"><label for="use-tp">使用刀具路径</label><input id="use-tp" type="checkbox"></div>
            <div class="row"><label for="pattern">参考线</label><select id="pattern" class="field"><option>1</option></select></div>
            <div class="row"><label for="order">顺序</label><select id="order" class="field cn"><option>参考线</option></select></div>
            <div class="row"><label for="cavity">型腔加工</label><input id="cavity" type="checkbox" checked></div>
          </fieldset>

          <fieldset class="g-lower">
            <legend>下限</legend>
            <div class="row"><label for="base">底部位置</label><select id="base" class="field cn picked"><option>驱动曲线</option></select></div>
            <div class="row"><label for="offset">轴向偏置</label><input id="offset" class="field short" type="text" value="0.0"></div>
          </fieldset>

          <fieldset class="g-gouge">
            <legend>避免过切</legend>
            <div class="row"><label for="gouge">过切检查</label><input id="gouge" type="checkbox" checked></div>
            <div class="row"><label for="strategy">策略</label><select id="strategy" class="field cn"><option>跟踪</option></select></div>
            <div class="row"><label for="upper">上限</label><input id="upper" type="checkbox"><input class="field short" type="text" value="0.0" aria-label="上限值" disabled></div>
          </fieldset>

          <fieldset class="g-multi">
            <legend>多重切削</legend>
            <div class="row"><label for="mode">方式</label><select id="mode" class="field cn"><option>关</option></select></div>
            <div class="row"><label for="maxstep" class="off">最大下切步距</label><input id="maxstep" class="field short" type="text" value="0.04" disabled></div>
            <div class="row last"><label for="cuts" class="off">切削次数</label><input id="cuts" type="checkbox" disabled><input class="field short" type="text" value="10" aria-label="切削次数值" disabled></div>
          </fieldset>
        </div>
      </div>

      <div class="preview">
        <button type="button" class="push-btn">预览</button>
        <label><input type="checkbox">显示</label>
      </div>

      <div class="actions">
        <button type="button" class="push-btn default">应用</button>
        <button type="button" class="push-btn">接受</button>
        <button type="button" class="push-btn">取消</button>
      </div>
    </form>

    <div class="mark mark-thick"></div>
    <div class="mark mark-base"></div>
  </section>
</body>
</html>
```

FILE: styles.css
```css
* {
  box-sizing: border-box;
}
body {
  margin: 0;
  height: 100vh;
  overflow: hidden;
  background: #ece9d8;
  font: 12px/14px "Noto Sans CJK SC", "Noto Sans", sans-serif;
  color: #000;
}
button, input, select {
  margin: 0;
  padding: 0;
  font: inherit;
  color: inherit;
}
button {
  background: none;
  border: 0;
}
svg {
  display: block;
}
.sprite {
  position: absolute;
}
.i16 { width: 16px; height: 16px; flex: none; }
.i20 { width: 20px; height: 20px; flex: none; }
.i24 { width: 24px; height: 24px; flex: none; }

/* main window */
.app {
  display: flex;
  flex-direction: column;
  height: 100vh;
  border: solid #6a7cd8;
  border-width: 0 4px 5px;
  border-bottom-color: #4a7cd8;
}
.titlebar {
  display: flex;
  align-items: center;
  gap: 3px;
  height: 30px;
  margin: 0 -4px;
  padding: 3px 6px 0 7px;
  background: linear-gradient(#5c78d0, #9cb4f0 3px, #7b96e0 9px, #7c98e4 20px, #86a8f0 26px, #6c84d8);
  border-radius: 6px 6px 0 0;
}
.titlebar h1 {
  margin: 0;
  font: bold 13px/14px "Liberation Mono", monospace;
  color: #dce6fa;
}
.win-buttons {
  display: flex;
  gap: 2px;
  margin-left: auto;
}
.win-btn {
  width: 21px;
  height: 21px;
  border: 1px solid #c8d4f8;
  border-radius: 3px;
  background: linear-gradient(135deg, #7c94ec, #3c60dc 60%, #4c78ec);
  color: #fff;
}
.win-btn.close-dim {
  background: linear-gradient(135deg, #c87c90, #b05468);
}
.menubar {
  display: flex;
  align-items: center;
  gap: 12px;
  height: 22px;
  padding-left: 5px;
  border-bottom: 1px solid #aca899;
  color: #aca899;
}
.menubar span, .latin {
  font-family: "Liberation Mono", monospace;
  font-size: 10px;
}
.toolbar {
  display: flex;
  align-items: center;
  flex: none;
  border: 1px solid #aca899;
  border-width: 0 1px 1px 0;
  box-shadow: 1px 1px 0 #fff, inset 0 1px 0 #fff;
}
.tool {
  display: block;
  flex: none;
}
.sep {
  flex: none;
  width: 2px;
  height: 27px;
  border-left: 1px solid #aca899;
  border-right: 1px solid #fff;
}
.main-tools {
  width: 842px;
  height: 33px;
  gap: 5px;
  padding: 0 3px 4px 4px;
}
.main-tools .sep {
  margin: 0 6px 0 5px;
}
.main-tools .tool {
  width: 20px;
}
.tools-end {
  display: flex;
  align-items: center;
  gap: 5px;
  margin-left: auto;
}
.tools-end .sep {
  margin: 0 5px 0 0;
}
.tools-end .arrows {
  margin: 0 5px 0 6px;
}
.bar-close {
  width: 14px;
  height: 14px;
  align-self: flex-start;
  margin-top: 3px;
  background: #f6f5ee;
  box-shadow: 1px 1px 0 #d4d0c0;
}
.refbar {
  display: flex;
  align-items: center;
  gap: 10px;
  height: 30px;
  padding: 0 4px 5px;
  box-shadow: inset 0 1px 0 #fff;
}
.refbar .field {
  width: 160px;
}

/* controls */
.field {
  height: 20px;
  padding: 0 3px 2px;
  border: 1px solid #7f9db9;
  border-radius: 0;
  background-color: #fff;
  font-family: "DejaVu Sans Mono", monospace;
  font-size: 10px;
  line-height: 16px;
  min-width: 0;
}
.field.short {
  height: 18px;
  padding-bottom: 0;
}
.field.cn {
  font-family: "Noto Sans CJK SC", sans-serif;
  font-size: 12px;
}
.field.ro, input.field:disabled {
  background-color: #ece9d8;
}
.field:disabled {
  color: #aca899;
  opacity: 1;
}
select.field {
  appearance: none;
  padding: 0 16px 2px 3px;
  background-image: url("data:image/svg+xml,%3Csvg xmlns='http://www.w3.org/2000/svg' width='15' height='16'%3E%3ClinearGradient id='g' x2='1' y2='1'%3E%3Cstop stop-color='%23dce6fe'/%3E%3Cstop offset='1' stop-color='%23aebff0'/%3E%3C/linearGradient%3E%3Crect width='15' height='16' rx='1' fill='url(%23g)'/%3E%3Cpath d='M4 6L7.500 9.500L11 6' fill='none' stroke='%234d6185' stroke-width='2.500'/%3E%3C/svg%3E");
  background-repeat: no-repeat;
  background-position: right 1px center;
}
select.field:disabled {
  border-color: #c9c7ba;
  background-color: #ece9d8;
  background-image: url("data:image/svg+xml,%3Csvg xmlns='http://www.w3.org/2000/svg' width='15' height='16'%3E%3Crect x='.5' y='.5' width='14' height='15' fill='%23f2f1ea' stroke='%23dddacb'/%3E%3Cpath d='M4 6L7.500 9.500L11 6' fill='none' stroke='%23c4c1b0' stroke-width='2.500'/%3E%3C/svg%3E");
}
select.field.picked {
  color: #fff;
  background-image: url("data:image/svg+xml,%3Csvg xmlns='http://www.w3.org/2000/svg' width='15' height='16'%3E%3Crect width='15' height='16' rx='1' fill='%23c2d0f8'/%3E%3Cpath d='M4 6L7.500 9.500L11 6' fill='none' stroke='%234d6185' stroke-width='2.500'/%3E%3C/svg%3E"), linear-gradient(#316ac5, #316ac5);
  background-position: right 1px center, 2px 2px;
  background-size: auto, 88px 14px;
}
.cutter {
  width: 123px;
}
input[type="checkbox"] {
  appearance: none;
  flex: none;
  width: 13px;
  height: 13px;
  border: 1px solid #1c5180;
  background: linear-gradient(135deg, #dcdcd7, #fff);
}
input[type="checkbox"]:checked {
  background: #fff url("data:image/svg+xml,%3Csvg xmlns='http://www.w3.org/2000/svg' width='11' height='11'%3E%3Cpath d='M3 5L5 7.500L8.500 3' fill='none' stroke='%2321a121' stroke-width='2'/%3E%3C/svg%3E");
}
input[type="checkbox"]:disabled {
  border-color: #cac8bb;
  background: #fff;
}
.split {
  display: flex;
  align-items: center;
  justify-content: space-between;
  width: 47px;
  height: 28px;
  padding: 1px;
  border: 1px solid #7f9db9;
  background: #fff;
}
.split.flat {
  width: 45px;
  height: 26px;
  border: 0;
}
.drop {
  align-self: stretch;
  width: 15px;
  background: url("data:image/svg+xml,%3Csvg xmlns='http://www.w3.org/2000/svg' width='15' height='16'%3E%3Cpath d='M4 6L7.500 9.500L11 6' fill='none' stroke='%234d6185' stroke-width='2.500'/%3E%3C/svg%3E") center no-repeat, linear-gradient(135deg, #dce6fe, #aebff0);
}
.icon-btn {
  display: grid;
  place-items: center;
  flex: none;
  width: 24px;
  height: 24px;
  border: 1px solid #003c74;
  border-radius: 3px;
  background: linear-gradient(#fff, #f0efe8);
}
.icon-btn svg {
  width: 20px;
  height: 20px;
}
.icon-btn.big {
  width: 40px;
  height: 40px;
}
.icon-btn.big svg {
  width: 36px;
  height: 36px;
}
.icon-btn:disabled {
  border-color: #c9c7ba;
  background: #f2f0e6;
}
.push-btn {
  width: 74px;
  height: 19px;
  border: 1px solid #003c74;
  border-radius: 3px;
  background: linear-gradient(#fff, #f2f1ea 80%, #d8d4c8);
  line-height: 15px;
}
.push-btn.default {
  box-shadow: inset 0 0 0 2px #a8c0f0;
}

/* explorer */
.workspace {
  display: flex;
  flex: 1;
  min-height: 0;
}
.explorer {
  width: 170px;
  margin-left: 1px;
  border: solid #000;
  border-width: 1px 0 0 1px;
  background: #fff;
  overflow: hidden;
}
.tabs {
  display: flex;
  align-items: flex-end;
  gap: 1px;
  height: 36px;
  padding: 0 2px;
  background: #ece9d8;
  border-bottom: 1px solid #919b9c;
}
.tab {
  display: grid;
  place-items: center;
  width: 28px;
  height: 25px;
  border: 1px solid #919b9c;
  border-bottom: 0;
  border-radius: 3px 3px 0 0;
  background: linear-gradient(#fff, #f0f0ea);
}
.tab.active {
  width: 36px;
  height: 29px;
  margin-bottom: -1px;
  border-top: 3px solid #ffb428;
  background: #fff;
}
.tree, .tree ul {
  list-style: none;
  margin: 0;
  padding: 0;
}
.tree {
  position: relative;
  margin-top: 4px;
}
.tree::before, .tree ul::before {
  content: "";
  position: absolute;
  left: 11px;
  top: 9px;
  bottom: 9px;
  border-left: 1px dotted #a0a090;
}
.tree ul {
  position: relative;
}
.tree ul::before {
  left: 30px;
  top: 0;
}
.node, .leaf {
  display: flex;
  align-items: center;
  height: 18px;
  white-space: nowrap;
}
.node {
  padding-left: 7px;
}
.node .i16 {
  margin: 0 5px 0 6px;
}
.leaf {
  padding-left: 26px;
}
.exp, .dots {
  position: relative;
  flex: none;
  width: 9px;
  height: 9px;
}
.exp {
  border: 1px solid #7898b5;
  border-radius: 1px;
  background: linear-gradient(#000, #000) center / 5px 1px no-repeat, linear-gradient(#000, #000) center / 1px 5px no-repeat, #fff;
}
.exp.minus {
  background: linear-gradient(#000, #000) center / 5px 1px no-repeat, #fff;
}
.exp::after, .dots::after {
  content: "";
  position: absolute;
  left: 9px;
  top: 3px;
  width: 5px;
  border-top: 1px dotted #a0a090;
}
.dots::after {
  left: 5px;
  top: 4px;
  width: 10px;
}
.tick {
  flex: none;
  width: 15px;
  height: 15px;
  margin: 0 4px 0 6px;
  border: solid #ccc;
  border-width: 0 1px 1px 0;
  border-radius: 4px;
  background: url("data:image/svg+xml,%3Csvg xmlns='http://www.w3.org/2000/svg' width='14' height='14'%3E%3Cpath d='M2 7L5 10.500L11 2' fill='none' stroke='%23222' stroke-width='1.700'/%3E%3C/svg%3E");
}
.tick.none {
  border-color: transparent;
  background: none;
}
.bulb {
  flex: none;
  width: 10px;
  height: 14px;
  margin-top: 3px;
}
.leaf .i16 {
  margin: 0 3px;
}
.leaf span {
  padding: 0 2px;
  font: 10px/18px "DejaVu Sans Mono", monospace;
}
.leaf .current {
  background: #ece9d8;
  font-size: 12px;
  font-weight: bold;
}

/* model view */
.viewport {
  flex: 1;
  min-width: 0;
  border-top: 1px solid #000;
  background: #000;
}
.viewport svg {
  width: 100%;
  height: 100%;
}
.axis-name {
  font: bold 11px "Liberation Sans", sans-serif;
  fill: #d01838;
}
.viewbar {
  width: 30px;
  padding-left: 2px;
  border-left: 1px solid #fff;
  overflow: hidden;
}
.tool-group {
  width: 25px;
  padding: 7px 0;
  border-bottom: 1px solid #aca899;
  box-shadow: 0 1px 0 #fff;
  margin-bottom: 1px;
}
.tool-group:first-child {
  padding: 3px 0 0;
}
.vtool {
  display: grid;
  place-items: center;
  width: 24px;
  height: 24px;
}
.vtool svg {
  width: 19px;
  height: 19px;
}
.shade {
  padding-top: 7px;
}
.shade-btn, .shade-more {
  display: grid;
  place-items: center;
  width: 24px;
  height: 24px;
  border: 1px solid #d0cdc0;
  border-radius: 3px 3px 0 0;
  background: #fff;
}
.shade-btn svg {
  width: 19px;
  height: 19px;
}
.shade-more {
  height: 9px;
}
.shade-more::after {
  content: "";
  border: 3px solid transparent;
  border-right: 5px solid #000;
  border-left: 0;
}
.peek {
  width: 12px;
  height: 4px;
  margin: 3px 0 0 6px;
}

/* bottom bars */
.pathbar {
  width: 522px;
  height: 31px;
  padding: 4px 2px 0;
  border-right: 1px solid #aca899;
}
.pathbar .field {
  width: 122px;
  height: 20px;
}
.cutter-bar {
  width: 475px;
  height: 34px;
  padding-left: 9px;
  box-shadow: 1px 1px 0 #fff, inset 0 1px 0 #fff, 0 -1px 0 #aca899;
}
.cutter-bar .cutter {
  margin: 0 11px 6px 9px;
}
.icon-field {
  display: flex;
  align-items: center;
}
.icon-field .field {
  width: 54px;
  height: 18px;
}
.cutter-bar .icon-field {
  margin-left: 12px;
  padding-bottom: 6px;
}
.cutter-bar .icon-field + .icon-field {
  margin: 0 26px 0 9px;
  gap: 3px;
}
.cutter-bar .tool {
  margin-left: 9px;
}
.cutter-bar .tool + .tool {
  margin: 0 4px;
}
.info-bar {
  width: 717px;
  height: 34px;
  padding: 0 5px 4px 43px;
}
.info-bar .field {
  width: 66px;
  height: 18px;
  margin: 0 8px 0 9px;
}
.info-bar .unit {
  width: 56px;
}
.info-bar label {
  padding-bottom: 2px;
}
.info-bar .sep + label {
  margin-left: 9px;
}
.info-bar .icon-field {
  padding: 0;
}
.info-bar .icon-field .field {
  margin: 0 0 0 5px;
}
.info-bar .last {
  margin: 0 auto 0 107px;
}
.statusbar {
  position: relative;
  display: flex;
  align-items: center;
  justify-content: space-between;
  height: 26px;
  padding: 0 15px 4px 5px;
  border-bottom: 1px solid #aca899;
}
.brand {
  display: flex;
  align-items: center;
  font: 18px/20px "DejaVu Sans Condensed", "DejaVu Sans", sans-serif;
  color: #2a7cd4;
}
.brand svg {
  width: 34px;
  height: 24px;
}
.grip {
  position: absolute;
  right: 0;
  bottom: 0;
  width: 10px;
  height: 10px;
  background: radial-gradient(#b8b4a4 1px, transparent 1px) 0 0 / 4px 4px;
  clip-path: polygon(100% 0, 100% 100%, 0 100%);
}

/* dialog window */
.dialog {
  position: absolute;
  left: 120px;
  top: 6px;
  width: 555px;
  border: solid #0838d8;
  border-width: 0 3px 3px;
  border-radius: 7px 7px 0 0;
  background: #ece9d8;
}
.dlg-title {
  display: flex;
  align-items: center;
  gap: 2px;
  height: 29px;
  margin: 0 -3px;
  padding: 1px 5px 0 6px;
  border-radius: 7px 7px 0 0;
  background: linear-gradient(#0848c8, #2c88fc 3px, #0458e8 8px, #0060f4 20px, #0468fc 25px, #0040c8);
}
.dlg-title h2 {
  flex: 1;
  margin: 0 0 0 1px;
  font: bold 14px/18px "Noto Sans CJK SC", sans-serif;
  color: #fff;
  text-shadow: 1px 1px 0 #0a2a80;
}
.win-btn.help {
  font: bold 16px/18px "Liberation Sans", sans-serif;
}
.win-btn.close {
  background: linear-gradient(135deg, #f09070, #d84820 60%, #c83810);
}
.dlg-body {
  padding: 10px 29px 7px 25px;
}
.cols {
  display: flex;
  justify-content: space-between;
}
.col {
  display: flex;
  flex-direction: column;
  gap: 7px;
  width: 240px;
}
.col.right {
  gap: 2px;
  padding-top: 6px;
}
.big-icons {
  display: flex;
  gap: 2px;
  margin-bottom: -5px;
}
fieldset {
  min-width: 0;
  margin: 0;
  padding: 3px 8px 5px 7px;
  border: 1px solid #d0d0bf;
  border-radius: 4px;
}
legend {
  padding: 0 1px;
  line-height: 12px;
  color: #0046d5;
}
.row {
  display: flex;
  align-items: center;
  justify-content: flex-end;
}
.row.top {
  align-items: flex-start;
}
.row.top label {
  line-height: 20px;
}
.off {
  color: #aca899;
  text-shadow: 1px 1px 0 #fff;
}
.row .cutter {
  margin: 0 4px 0 3px;
}
.g-tool {
  padding: 2px 8px 1px 7px;
}
.g-tol {
  padding: 0 8px 9px 7px;
}
.tol-row .field {
  width: 66px;
  margin: 0 22px 0 8px;
}
.g-thick {
  margin: 4px -2px 0 0;
  padding: 3px 4px 4px 5px;
}
.g-thick .field {
  width: 48px;
  height: 18px;
  margin-left: 9px;
}
.g-thick .push {
  margin-left: auto;
}
.g-step .field {
  width: 53px;
  margin: 0 8px;
}
.g-bound {
  padding-bottom: 8px;
}
.g-bound .trim {
  width: 107px;
  margin: 0 1px 0 8px;
}
.g-leads {
  display: flex;
  flex-direction: column;
  padding-bottom: 2px;
}
.g-leads .row {
  margin-bottom: 7px;
}
.g-leads .row:last-child {
  margin-bottom: 0;
}
.g-leads .field {
  width: 123px;
  margin: 0 1px 0 10px;
}
.g-axis .field {
  width: 107px;
  margin: 0 4px 0 7px;
}
.name-row {
  margin-bottom: 16px;
}
.name-row .field {
  width: 150px;
  margin-left: 7px;
}
.right fieldset {
  padding: 1px 6px 7px;
}
.right fieldset .row + .row {
  margin-top: 5px;
}
.right .g-drive {
  padding-bottom: 3px;
}
.right select.field {
  width: 111px;
  margin-left: 6px;
}
.right fieldset .short {
  width: 54px;
  margin-left: 6px;
}
.right input[type="checkbox"] {
  margin-left: 3px;
}
.right fieldset .row.last {
  margin-top: 8px;
}
.preview {
  display: flex;
  align-items: center;
  gap: 9px;
  margin-top: 16px;
  padding-left: 1px;
}
.preview .push-btn {
  width: 88px;
}
.preview label {
  display: flex;
  align-items: center;
  gap: 3px;
}
.actions {
  display: flex;
  justify-content: center;
  gap: 11px;
  margin-top: 27px;
}

/* red call-outs */
.mark {
  position: absolute;
  border: 1px solid #f01010;
  pointer-events: none;
}
.mark-thick {
  left: 28px;
  top: 169px;
  width: 104px;
  height: 52px;
}
.mark-base {
  left: 276px;
  top: 180px;
  width: 244px;
  height: 39px;
}
```
